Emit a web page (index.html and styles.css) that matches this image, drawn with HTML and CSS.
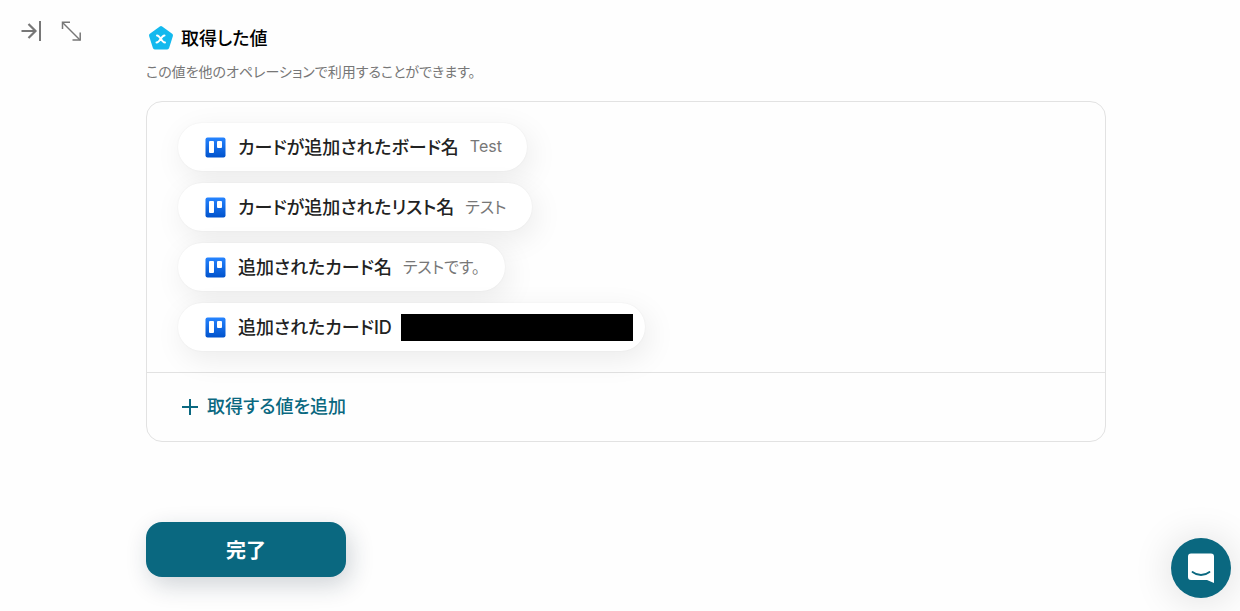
FILE: index.html
```html
<!DOCTYPE html>
<html lang="ja">
<head>
  <meta charset="UTF-8" />
  <meta name="viewport" content="width=device-width, initial-scale=1" />
  <title>取得した値</title>
  <link rel="stylesheet" href="styles.css">
</head>
<body>

  <div class="panel-tools">
    <button class="icon-button" type="button" aria-label="閉じる">
      <svg width="22" height="22" viewBox="0 0 22 22" fill="none" stroke="currentColor" stroke-width="2">
        <path d="M1.500 11h13.500"></path>
        <path d="m8.500 4 7 7-7 7" stroke-width="2.200"></path>
        <path d="M20 1v20"></path>
      </svg>
    </button>
    <button class="icon-button" type="button" aria-label="拡大">
      <svg width="22" height="22" viewBox="0 0 22 22" fill="none" stroke="currentColor" stroke-width="1.500">
        <path d="M2.500 2.500l17.500 17.500"></path>
        <path d="M2.500 9V2.300H10"></path>
        <path d="M12.500 20H20.200V12.500"></path>
      </svg>
    </button>
  </div>

  <main class="content">
    <h2 class="title">
      <svg width="26" height="26" viewBox="0 0 26 26" aria-hidden="true">
        <path d="M13 3 23 10.300 19.200 22.500H6.800L3 10.300z" fill="#13b9ee" stroke="#13b9ee" stroke-width="4" stroke-linejoin="round"></path>
        <path d="M9 10.500c3.500 0 4 7 8 7M16.500 10.500c-3.500 0-4 7-8 7" fill="none" stroke="#fff" stroke-width="2" stroke-linecap="round"></path>
      </svg>
      <span class="title-text">取得した値</span>
    </h2>
    <p class="description">この値を他のオペレーションで利用することができます。</p>

    <section class="card">
      <ul class="values">
        <li class="value">
          <svg class="trello" width="21" height="21" viewBox="0 0 21 21" aria-hidden="true">
            <defs>
              <linearGradient id="trelloBlue" x1="0" y1="0" x2="0" y2="1">
                <stop offset="0" stop-color="#2684ff"></stop>
                <stop offset="1" stop-color="#0052cc"></stop>
              </linearGradient>
            </defs>
            <rect x="0.500" y="0.500" width="20" height="20" rx="2" fill="url(#trelloBlue)"></rect>
            <rect x="4" y="4" width="5" height="12" rx="1" fill="#fff"></rect>
            <rect x="12" y="4" width="5" height="7" rx="1" fill="#fff"></rect>
          </svg>
          <span class="name">カードが追加されたボード名</span>
          <span class="sample">Test</span>
        </li>
        <li class="value">
          <svg class="trello" width="21" height="21" viewBox="0 0 21 21" aria-hidden="true">
            <rect x="0.500" y="0.500" width="20" height="20" rx="2" fill="url(#trelloBlue)"></rect>
            <rect x="4" y="4" width="5" height="12" rx="1" fill="#fff"></rect>
            <rect x="12" y="4" width="5" height="7" rx="1" fill="#fff"></rect>
          </svg>
          <span class="name">カードが追加されたリスト名</span>
          <span class="sample">テスト</span>
        </li>
        <li class="value">
          <svg class="trello" width="21" height="21" viewBox="0 0 21 21" aria-hidden="true">
            <rect x="0.500" y="0.500" width="20" height="20" rx="2" fill="url(#trelloBlue)"></rect>
            <rect x="4" y="4" width="5" height="12" rx="1" fill="#fff"></rect>
            <rect x="12" y="4" width="5" height="7" rx="1" fill="#fff"></rect>
          </svg>
          <span class="name">追加されたカード名</span>
          <span class="sample">テストです。</span>
        </li>
        <li class="value masked">
          <svg class="trello" width="21" height="21" viewBox="0 0 21 21" aria-hidden="true">
            <rect x="0.500" y="0.500" width="20" height="20" rx="2" fill="url(#trelloBlue)"></rect>
            <rect x="4" y="4" width="5" height="12" rx="1" fill="#fff"></rect>
            <rect x="12" y="4" width="5" height="7" rx="1" fill="#fff"></rect>
          </svg>
          <span class="name">追加されたカードID</span>
          <span class="mask"></span>
        </li>
      </ul>
      <div class="card-footer">
        <button class="add-button" type="button">
          <svg width="18" height="18" viewBox="0 0 18 18" fill="none" stroke="currentColor" stroke-width="2" aria-hidden="true">
            <path d="M9 1v16M1 9h16"></path>
          </svg>
          取得する値を追加
        </button>
      </div>
    </section>

    <button class="done-button" type="button">完了</button>
  </main>

  <button class="chat-button" type="button" aria-label="チャット">
    <svg width="28" height="32" viewBox="0 0 28 32" aria-hidden="true">
      <path d="M4 1.500h20a3 3 0 0 1 3 3V31L20 28H4a3 3 0 0 1-3-3V4.500a3 3 0 0 1 3-3z" fill="#fff"></path>
      <path d="M5.500 20c5 4 12 4 17 0" fill="none" stroke="#0a6880" stroke-width="1.800" stroke-linecap="round"></path>
    </svg>
  </button>

</body>
</html>
```
FILE: styles.css
```css
* {
  margin: 0;
  padding: 0;
  box-sizing: border-box;
}
body {
  min-height: 100vh;
  background: #fefefe;
  color: #222;
  font-family: Inter, "Noto Sans CJK JP", sans-serif;
  font-feature-settings: "palt";
}
button {
  border: none;
  background: none;
  font-family: inherit;
  font-feature-settings: inherit;
  cursor: pointer;
}
svg {
  display: block;
  flex-shrink: 0;
}
.panel-tools {
  position: fixed;
  top: 20px;
  left: 20px;
  display: flex;
  gap: 18px;
}
.icon-button {
  color: #777;
}
.content {
  max-width: 1240px;
  padding: 24px 134px 34px 146px;
}
.title {
  display: flex;
  align-items: center;
  gap: 7px;
  height: 28px;
  padding-left: 2px;
  color: #000;
  font-size: 18px;
  font-weight: 500;
  line-height: 28px;
}
.title-text {
  padding-top: 2px;
}
.description {
  margin-top: 10px;
  color: #777;
  font-size: 14px;
  line-height: 20px;
}
.card {
  margin-top: 19px;
  border: 1px solid #e2e2e2;
  border-radius: 16px;
}
.values {
  display: flex;
  flex-direction: column;
  align-items: flex-start;
  gap: 12px;
  padding: 21px 31px;
  list-style: none;
}
.value {
  display: flex;
  align-items: center;
  height: 48px;
  padding: 0 25px 0 27px;
  border-radius: 24px;
  background: #fff;
  box-shadow: 4px 8px 30px rgba(0, 0, 0, 0.08), 0 0 2px rgba(0, 0, 0, 0.06);
}
.name {
  margin-left: 12px;
  padding-bottom: 2px;
  font-size: 18px;
  font-weight: 500;
}
.sample {
  margin-left: 11px;
  padding-bottom: 2px;
  color: #777;
  font-size: 16px;
}
.masked {
  padding-right: 12px;
}
.mask {
  width: 232px;
  height: 27px;
  margin-left: 9px;
  background: #000;
}
.card-footer {
  padding: 20px 34px;
  border-top: 1px solid #e2e2e2;
}
.add-button {
  display: flex;
  align-items: center;
  gap: 8px;
  color: #0a6880;
  font-size: 18px;
  font-weight: 500;
  line-height: 28px;
}
.done-button {
  width: 200px;
  height: 55px;
  margin-top: 80px;
  border-radius: 16px;
  background: #0a6880;
  box-shadow: 4px 8px 24px rgba(20, 40, 60, 0.2);
  color: #fff;
  font-size: 20px;
  font-weight: 700;
}
.chat-button {
  position: fixed;
  right: 9px;
  bottom: 13px;
  display: flex;
  align-items: center;
  justify-content: center;
  width: 60px;
  height: 60px;
  border-radius: 50%;
  background: #0a6880;
  box-shadow: 0 2px 40px rgba(0, 0, 0, 0.14);
}
```
